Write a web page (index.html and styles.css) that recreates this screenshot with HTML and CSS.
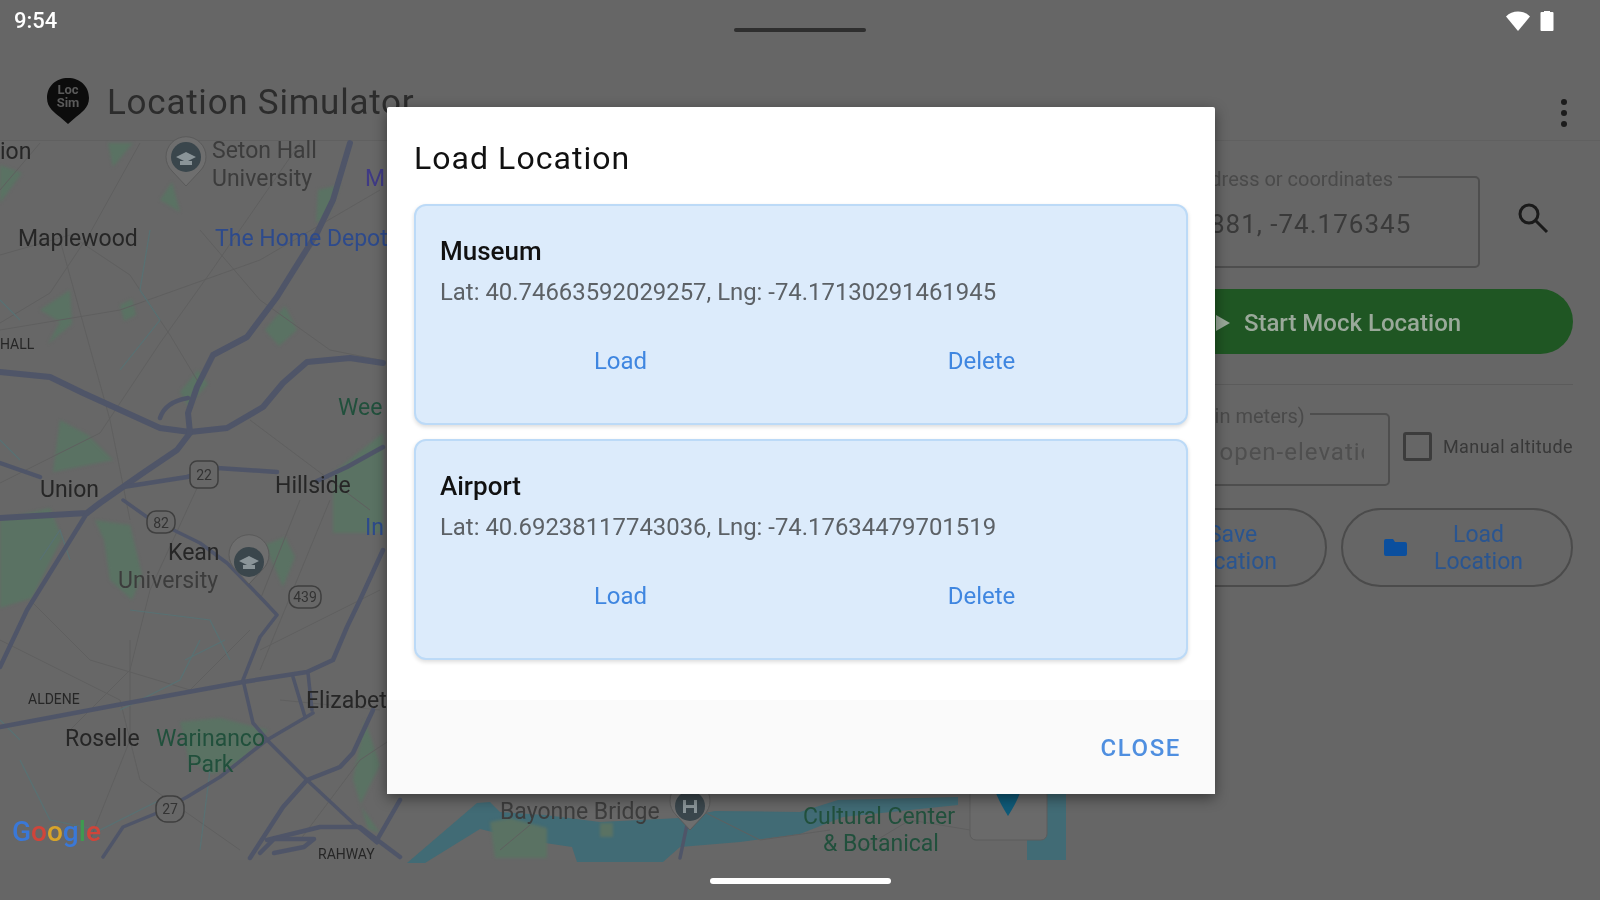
FILE: index.html
```html
<!DOCTYPE html>
<html lang="en">
<head>
  <meta charset="UTF-8">
  <title>Location Simulator</title>
  <link rel="stylesheet" href="styles.css">
</head>
<body>

  <div class="status-bar">
    <span class="clock">9:54</span>
    <span class="notch"></span>
    <span class="status-icons">
      <svg width="26" height="22" viewBox="0 0 26 22"><path class="white" d="M1 6.500C4 3 8.500 1.500 13 1.500S22 3 25 6.500L13 21z"/></svg>
      <svg width="14" height="22" viewBox="0 0 14 22"><path class="white" d="M4 2V1h6v1h2.500q1 0 1 1v17q0 1-1 1h-11q-1 0-1-1V3q0-1 1-1z"/></svg>
    </span>
  </div>

  <div class="app-bar">
    <svg class="logo" width="44" height="48" viewBox="0 0 44 48">
      <path d="M22 1C10 1 1 9 1 21c0 10 8 15 13 19l8 7 8-7c5-4 13-9 13-19C43 9 34 1 22 1z"/>
      <text class="logo-text" x="22" y="17">Loc</text>
      <text class="logo-text" x="22" y="30">Sim</text>
    </svg>
    <span class="app-title">Location Simulator</span>
    <span class="menu-dots"><i></i><i></i><i></i></span>
  </div>

  <div class="main">
    <div class="map">
      <svg width="1066" height="719" viewBox="0 141 1066 719">
        <!-- parks -->
        <g class="park">
          <path d="M0 165l22 8-22 30zM108 143h25l-20 24zM160 200l12-18 8 30zM318 190l22-5-12 30-12 8zM70 290l-30 20 20 12-12 22 24-20zM0 520l50-12 12 30-30 60-32 10zM95 520l35 5 12 50-10 25-22-20-6-40zM333 473l50-40v100h-50zM265 545l20-8 10 20-12 30zM180 392l18-22 10 14-20 22zM60 420l28 15 25 25-60 12zM265 330l20-24 12 24-18 16zM120 305l12-6 4 16-12 6z"/>
          <path d="M180 722l40-4 48 12-25 30-30 14-24-14zM365 720l15 45-20 40 20 28-12-4-15-50z"/>
        </g>
        <!-- water -->
        <path class="water" d="M477 803l13-1 10 10 45 3 55 7 80-4 35-7 85 1 38-12 120-3v8l-115 12-43 17-60 8-60 5-17 15h-86l-5-15-47-7-45-11-55 34h-18z"/>
        <path class="water" d="M1027 790h39v70h-39z"/>
        <path class="park" d="M490 822l20-4 37 10v30h-52zM600 823h13v14h-13z"/>
        <!-- minor streets -->
        <g class="street">
          <path d="M0 255l70-20 60 40 40 60 30 50M40 143L0 190M140 143l-50 90-40 60-50 30M300 143l-90 130-50 70-60 90-100 50M200 230l60 70 70 50 50 10M0 330l120-20 140-50 120-70M60 240l50 180 20 100M250 420l120 90M210 460l-60 130-20 80-60 60M300 500l-40 100M330 500l-70 170M30 600l60 60 100 30 60-60M0 640l120 60 20 80 100 70M130 640v100l-40 100M380 590l-120 60M280 700l100 10M300 840l60-80 30-20M500 850l30-25M700 810l60 30 70-10M860 850l50-30 60 10"/>
        </g>
        <g class="stream">
          <path d="M0 300l20 20M150 230l-10 60 20 30-40 50M0 440l20 20M40 560l20-30 10 30M200 640l-20 40-60 30M20 760l30 60 50 10 60-30M0 720l20 20M210 770l-10 80M130 610l80 10 20 40M185 660l40-20"/>
        </g>
        <!-- highways -->
        <g class="road wide">
          <path d="M0 372l50 5 33 16 44 20 33 15 30 4 37-4 36-21 20-24 24-21 43-4 33 5"/>
          <path d="M350 143l-17 57-16 33-40 64-30 40-34 18-16 32-9 26 2 20-13 17-34 23-43 30-13 10L0 518"/>
        </g>
        <g class="road mid">
          <path d="M160 418q5-16 28-20M87 513l-60 97-27 57M0 463l40 14M123 487l64-10 30-9 60 4M383 447l-36 20-30 14M373 710l-20 43-13 14-33 13-24 27-33 51M267 840l53-13h40l40 30M400 800l-23 40"/>
          <path d="M0 727l117-22 126-23 64-10 26-12 14-33 13-27 23-50"/>
          <path d="M260 853l14-14h40l-10 8-30 6"/>
        </g>
        <g class="road thin">
          <path d="M123 500l24 17 53 26 27 20 36 37 14 15-17 22-17 43 10 43 17 20 37 37 46 43 24 20"/>
          <path d="M103 857l20-30 34-14 30-16 33-20 47-37 46-27"/>
          <path d="M293 677l12 40M308 673l4 37M680 858l8-38"/>
        </g>
        <!-- route shields -->
        <g class="shield-group">
          <rect class="shield" x="190" y="461" width="28" height="27" rx="7"/>
          <text class="shield-num" x="204" y="480">22</text>
          <rect class="shield" x="147" y="511" width="28" height="22" rx="9"/>
          <text class="shield-num" x="161" y="528">82</text>
          <rect class="shield" x="289" y="586" width="32" height="22" rx="9"/>
          <text class="shield-num" x="305" y="602">439</text>
          <rect class="shield" x="156" y="796" width="28" height="26" rx="11"/>
          <text class="shield-num" x="170" y="814">27</text>
        </g>
        <!-- place pins -->
        <g>
          <path class="pin-rim" d="M186 186l-14-15a20 20 0 1 1 28 0z"/>
          <circle class="pin-dot" cx="186" cy="157" r="15"/>
          <path class="pin-cap" d="M176 157l10-5 10 5-10 5zM180 161h12v4h-12z"/>
          <path class="pin-rim" d="M249 584l-14-15a20 20 0 1 1 28 0z"/>
          <circle class="pin-dot" cx="249" cy="562" r="15"/>
          <path class="pin-cap" d="M239 561l10-5 10 5-10 5zM243 565h12v4h-12z"/>
          <path class="pin-rim" d="M690 830l-14-15a20 20 0 1 1 28 0z"/>
          <circle class="pin-dot" cx="690" cy="806" r="15"/>
          <path class="pin-cap" d="M683 800h3v5h8v-5h3v13h-3v-5h-8v5h-3z"/>
        </g>
        <!-- labels -->
        <text class="lbl" x="0" y="159">ion</text>
        <text class="lbl grey" x="212" y="158">Seton Hall</text>
        <text class="lbl grey" x="212" y="186">University</text>
        <text class="lbl purple" x="365" y="186">M</text>
        <text class="lbl" x="18" y="246">Maplewood</text>
        <text class="lbl blue" x="215" y="246">The Home Depot</text>
        <text class="lbl small" x="0" y="349">HALL</text>
        <text class="lbl green" x="338" y="415">Wee</text>
        <text class="lbl" x="40" y="497">Union</text>
        <text class="lbl" x="275" y="493">Hillside</text>
        <text class="lbl blue" x="365" y="535">In</text>
        <text class="lbl" x="168" y="560">Kean</text>
        <text class="lbl grey" x="118" y="588">University</text>
        <text class="lbl small" x="28" y="704">ALDENE</text>
        <text class="lbl" x="65" y="746">Roselle</text>
        <text class="lbl green" x="156" y="746">Warinanco</text>
        <text class="lbl green" x="187" y="772">Park</text>
        <text class="lbl" x="306" y="708">Elizabeth</text>
        <text class="lbl small" x="318" y="859">RAHWAY</text>
        <text class="lbl grey" x="500" y="819">Bayonne Bridge</text>
        <text class="lbl green" x="803" y="824">Cultural Center</text>
        <text class="lbl green" x="823" y="851">&amp; Botanical</text>
        <text class="google" x="12" y="841"><tspan fill="#3a78d8">G</tspan><tspan fill="#d0453a">o</tspan><tspan fill="#d7a42a">o</tspan><tspan fill="#3a78d8">g</tspan><tspan fill="#3f9a50">l</tspan><tspan fill="#d0453a">e</tspan></text>
        <!-- my location tile -->
        <rect class="tile" x="970" y="780" width="77" height="60" rx="6"/>
        <path class="marker" d="M993 780h30q0 12-15 36q-15-24-15-36z"/>
      </svg>
    </div>

    <div class="panel">
      <div class="search-row">
        <div class="field address">
          <span class="field-label">Address or coordinates</span>
          <span class="field-value">40.719881, -74.176345</span>
        </div>
        <svg class="search-icon" width="34" height="34" viewBox="0 0 34 34"><circle cx="13" cy="13" r="9"/><path d="M20 20l11 11"/></svg>
      </div>

      <div class="start-btn">
        <svg width="16" height="18" viewBox="0 0 16 18"><path d="M1 1l14 8-14 8z"/></svg>
        <span>Start Mock Location</span>
      </div>

      <div class="divider"></div>

      <div class="altitude-row">
        <div class="field altitude">
          <span class="field-label">Altitude (in meters)</span>
          <span class="field-value muted">Using open-elevation</span>
        </div>
        <span class="checkbox"></span>
        <span class="check-label">Manual altitude</span>
      </div>

      <div class="button-row">
        <div class="outline-btn">
          <svg width="25" height="19" viewBox="0 0 25 19"><path d="M1 3q0-2 2-2h7l2 3h10q2 0 2 2v10q0 2-2 2H3q-2 0-2-2z"/></svg>
          <span>Save<br>Location</span>
        </div>
        <div class="outline-btn">
          <svg width="25" height="19" viewBox="0 0 25 19"><path d="M1 3q0-2 2-2h7l2 3h10q2 0 2 2v10q0 2-2 2H3q-2 0-2-2z"/></svg>
          <span>Load<br>Location</span>
        </div>
      </div>
    </div>
  </div>

  <div class="nav-bar"><span class="home-pill"></span></div>

  <!-- Load Location dialog -->
  <div class="dialog">
    <div class="dialog-body">
      <h2 class="dialog-title">Load Location</h2>

      <div class="loc-card">
        <div class="loc-name">Museum</div>
        <div class="loc-coords">Lat: 40.74663592029257, Lng: -74.17130291461945</div>
        <div class="loc-actions">
          <span>Load</span>
          <span>Delete</span>
        </div>
      </div>

      <div class="loc-card">
        <div class="loc-name">Airport</div>
        <div class="loc-coords">Lat: 40.69238117743036, Lng: -74.17634479701519</div>
        <div class="loc-actions">
          <span>Load</span>
          <span>Delete</span>
        </div>
      </div>
    </div>

    <div class="dialog-footer">
      <span class="close-btn">CLOSE</span>
    </div>
  </div>

</body>
</html>
```

FILE: styles.css
```css
* {
  box-sizing: border-box;
}

body {
  margin: 0;
  width: 1600px;
  height: 900px;
  overflow: hidden;
  position: relative;
  background-color: #666666;
  color: #2a2a2a;
  font-family: Roboto, "Liberation Sans", sans-serif;
}

/* the whole capture is slightly soft */
.status-bar, .app-bar, .main, .nav-bar, .dialog {
  filter: blur(0.45px);
}

/* status bar */
.status-bar {
  height: 40px;
  display: grid;
  grid-template-columns: 1fr auto 1fr;
  padding: 10px 14px 0;
}

.clock {
  color: #ffffff;
  font-size: 22px;
  font-weight: 500;
  line-height: 21px;
}

.notch {
  width: 132px;
  height: 4px;
  margin-top: 18px;
  border-radius: 2px;
  background-color: #2e2e2e;
}

.status-icons {
  display: flex;
  justify-content: flex-end;
  gap: 9px;
  padding-right: 32px;
}

.white {
  fill: #ffffff;
}

/* app bar */
.app-bar {
  height: 101px;
  display: flex;
  align-items: flex-start;
  padding: 37px 33px 0 46px;
  border-bottom: 1px solid #606060;
}

.logo path {
  fill: #0c0c0c;
}

.logo-text {
  fill: #5a5a5a;
  font-size: 13px;
  font-weight: 700;
  text-anchor: middle;
}

.app-title {
  margin: 4px 0 0 17px;
  font-size: 35px;
  line-height: 44px;
  letter-spacing: 0.75px;
  color: #2c2c2c;
}

.menu-dots {
  margin: 22px 0 0 auto;
  display: flex;
  flex-direction: column;
  gap: 5px;
}

.menu-dots i {
  width: 6px;
  height: 6px;
  border-radius: 50%;
  background-color: #1c1c1c;
}

/* main area */
.main {
  height: 719px;
  display: flex;
}

.map {
  width: 1066px;
  height: 719px;
  flex-shrink: 0;
  background-color: #676767;
}

.map svg {
  display: block;
  overflow: visible;
}

.park {
  fill: #5a7263;
  filter: blur(1.5px);
}

.water {
  fill: #416b75;
}

.street {
  fill: none;
  stroke: #5f5f5f;
  stroke-width: 1;
}

.stream {
  fill: none;
  stroke: #587173;
  stroke-width: 1.2;
}

.road {
  fill: none;
  stroke: #4f5568;
  stroke-linejoin: round;
  stroke-linecap: round;
}

.road.wide {
  stroke-width: 6;
}

.road.mid {
  stroke-width: 4.5;
}

.road.thin {
  stroke-width: 3.5;
}

.shield {
  fill: #676767;
  stroke: #3f3f3f;
  stroke-width: 1.5;
}

.shield-num {
  fill: #333333;
  font-size: 14px;
  text-anchor: middle;
}

.pin-rim {
  fill: #6e6e6e;
  stroke: #5a5a5a;
}

.pin-dot {
  fill: #3a464c;
}

.pin-cap {
  fill: #8a9498;
}

.lbl {
  fill: #262626;
  font-size: 23px;
}

.lbl.grey {
  fill: #3c3c3c;
}

.lbl.blue {
  fill: #2d4a8c;
}

.lbl.purple {
  fill: #3f3a85;
}

.lbl.green {
  fill: #21503c;
}

.lbl.small {
  font-size: 14px;
}

.google {
  font-size: 28px;
  font-weight: 500;
}

.tile {
  fill: #6a6a6a;
  stroke: #5c5c5c;
}

.marker {
  fill: #0f5a78;
}

/* right panel */
.panel {
  flex: 1;
  padding: 35px 27px 0 29px;
}

.search-row {
  display: flex;
  align-items: flex-start;
}

.field {
  position: relative;
  border: 2px solid #4e4e4e;
  border-radius: 5px;
  display: flex;
  align-items: center;
  overflow: visible;
}

.field.address {
  width: 385px;
  height: 92px;
  padding: 4px 0 0 27px;
}

.field-label {
  position: absolute;
  top: -9px;
  padding: 0 5px;
  background-color: #666666;
  color: #4a4a4a;
  font-size: 20px;
  line-height: 20px;
  white-space: nowrap;
}

.address .field-label {
  left: 84px;
}

.altitude .field-label {
  left: 32px;
}

.field-value {
  font-size: 26px;
  letter-spacing: 1px;
  color: #3a3a3a;
  white-space: nowrap;
}

.field-value.muted {
  color: #4f4f4f;
  font-size: 24px;
  width: 217px;
  overflow: hidden;
}

.search-icon {
  margin: 25px 0 0 36px;
  fill: none;
  stroke: #1a1a1a;
  stroke-width: 3;
}

.start-btn {
  height: 65px;
  margin-top: 21px;
  padding: 2px 0 0 8px;
  border-radius: 33px;
  background-color: #1f5623;
  display: flex;
  align-items: center;
  justify-content: center;
  gap: 13px;
  color: #9aa99a;
  font-size: 24px;
  font-weight: 500;
}

.start-btn path {
  fill: #9aa99a;
}

.divider {
  height: 1px;
  margin-top: 30px;
  background-color: #5b5b5b;
}

.altitude-row {
  display: flex;
  align-items: center;
  height: 73px;
  margin-top: 28px;
}

.field.altitude {
  width: 295px;
  height: 73px;
  padding: 4px 0 0 50px;
}

.checkbox {
  width: 29px;
  height: 29px;
  margin: -6px 0 0 13px;
  border: 3px solid #3c3c3c;
  border-radius: 3px;
}

.check-label {
  margin: -6px 0 0 11px;
  font-size: 18px;
  letter-spacing: 0.4px;
  color: #383838;
  white-space: nowrap;
}

.button-row {
  display: flex;
  gap: 14px;
  margin-top: 22px;
}

.outline-btn {
  flex: 1;
  height: 79px;
  border: 2px solid #4b4b4b;
  border-radius: 40px;
  display: flex;
  align-items: center;
  justify-content: center;
  gap: 26px;
  padding-right: 8px;
  color: #2a5590;
  font-size: 23px;
  line-height: 27px;
  text-align: center;
}

.outline-btn path {
  fill: #0b4f9e;
}

/* bottom nav */
.nav-bar {
  height: 40px;
  display: flex;
  justify-content: center;
  padding-top: 18px;
}

.home-pill {
  width: 181px;
  height: 6px;
  border-radius: 3px;
  background-color: #ffffff;
}

/* dialog */
.dialog {
  position: absolute;
  left: 387px;
  top: 107px;
  width: 828px;
  height: 687px;
  display: flex;
  flex-direction: column;
  background-color: #ffffff;
  border-radius: 2px;
  box-shadow: 0 4px 14px rgba(0, 0, 0, 0.45);
}

.dialog-body {
  flex: 1;
  padding: 0 27px;
}

.dialog-title {
  margin: 0;
  padding-top: 30px;
  height: 97px;
  font-size: 32px;
  line-height: 42px;
  font-weight: 400;
  letter-spacing: 1.05px;
  color: #111111;
}

.loc-card {
  height: 221px;
  margin-bottom: 14px;
  padding: 28px 24px 0;
  border: 2px solid #bcdaf7;
  border-radius: 12px;
  background-color: #dcebfb;
  box-shadow: 0 2px 4px rgba(0, 0, 0, 0.14);
}

.loc-name {
  font-size: 26px;
  line-height: 34px;
  font-weight: 500;
  color: #111111;
}

.loc-coords {
  margin-top: 7px;
  font-size: 23.9px;
  line-height: 34px;
  color: #5c6166;
}

.loc-actions {
  display: flex;
  margin-top: 35px;
  font-size: 24px;
  line-height: 34px;
  font-weight: 400;
  color: #3f86e0;
  text-align: center;
}

.loc-actions span {
  flex: 1;
}

.dialog-footer {
  height: 94px;
  padding: 31px 34px 0 0;
  background-color: #fafafa;
  text-align: right;
}

.close-btn {
  font-size: 24px;
  line-height: 34px;
  font-weight: 500;
  letter-spacing: 1.6px;
  color: #4f8fe0;
}
```
